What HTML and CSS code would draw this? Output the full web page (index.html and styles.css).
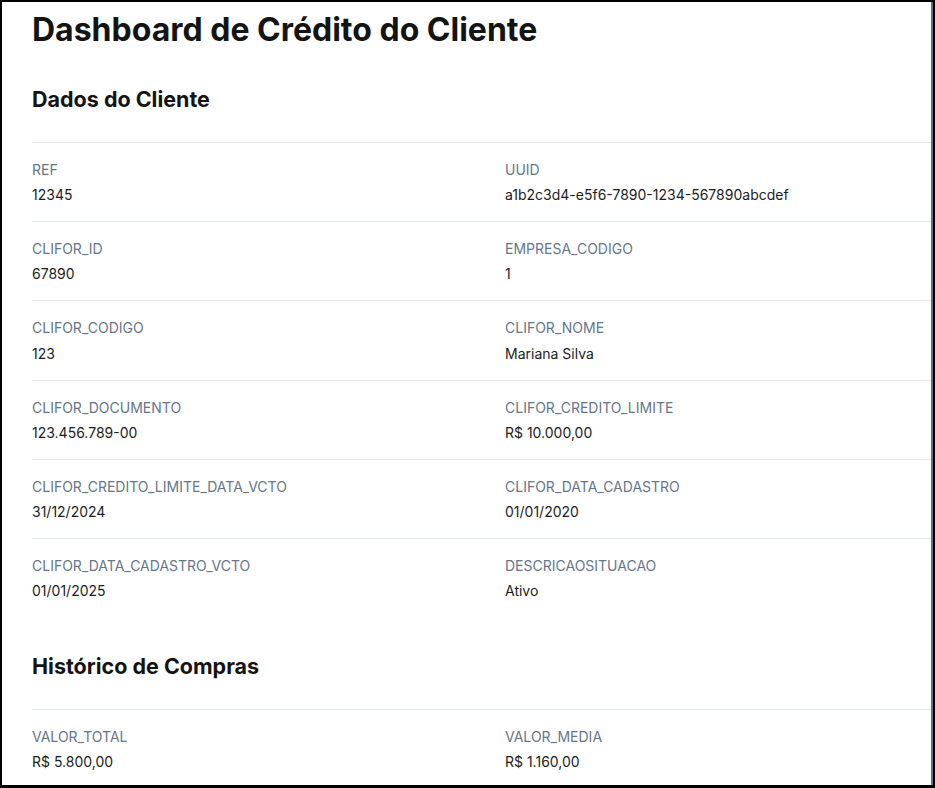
FILE: index.html
```html
<!DOCTYPE html>
<html lang="pt-BR">
    <head>
        <meta charset="UTF-8">
        <title>Dashboard de Crédito do Cliente</title>
        <link rel="stylesheet" href="styles.css">
    </head>
    <body>
        <div class="window">
            <div class="page">
                <h1>Dashboard de Crédito do Cliente</h1>

                <h2>Dados do Cliente</h2>
                <div class="fields">
                    <div class="field"><div class="label">REF</div><div class="value">12345</div></div>
                    <div class="field"><div class="label">UUID</div><div class="value">a1b2c3d4-e5f6-7890-1234-567890abcdef</div></div>
                    <div class="field"><div class="label">CLIFOR_ID</div><div class="value">67890</div></div>
                    <div class="field"><div class="label">EMPRESA_CODIGO</div><div class="value">1</div></div>
                    <div class="field"><div class="label">CLIFOR_CODIGO</div><div class="value">123</div></div>
                    <div class="field"><div class="label">CLIFOR_NOME</div><div class="value">Mariana Silva</div></div>
                    <div class="field"><div class="label">CLIFOR_DOCUMENTO</div><div class="value">123.456.789-00</div></div>
                    <div class="field"><div class="label">CLIFOR_CREDITO_LIMITE</div><div class="value">R$ 10.000,00</div></div>
                    <div class="field"><div class="label">CLIFOR_CREDITO_LIMITE_DATA_VCTO</div><div class="value">31/12/2024</div></div>
                    <div class="field"><div class="label">CLIFOR_DATA_CADASTRO</div><div class="value">01/01/2020</div></div>
                    <div class="field"><div class="label">CLIFOR_DATA_CADASTRO_VCTO</div><div class="value">01/01/2025</div></div>
                    <div class="field"><div class="label">DESCRICAOSITUACAO</div><div class="value">Ativo</div></div>
                </div>

                <h2>Histórico de Compras</h2>
                <div class="fields">
                    <div class="field"><div class="label">VALOR_TOTAL</div><div class="value">R$ 5.800,00</div></div>
                    <div class="field"><div class="label">VALOR_MEDIA</div><div class="value">R$ 1.160,00</div></div>
                </div>
            </div>
        </div>
    </body>
</html>
```

FILE: styles.css
```css
*{
    padding: 0px;
    margin: 0px;
    box-sizing: border-box;
}
html,body{
    height: 100%;
    background: #000;
    overflow: hidden;
}
body{
    font-family: Inter, "Noto Sans", sans-serif;
    color: #1f2328;
}
.window{
    margin: 2px 0 0 2px;
    width: 931px;
    height: 783px;
    background: #fff;
    border-right: 2px solid #5d6d8a;
    overflow: hidden;
}
.page{
    width: 976px;
    padding: 8px 0 0 30px;
}
h1{
    font-size: 32px;
    line-height: 40px;
    font-weight: 700;
    color: #141414;
}
h2{
    font-size: 21.5px;
    line-height: 28px;
    font-weight: 700;
    color: #141414;
    margin-top: 35px;
    margin-bottom: 29px;
}
.fields + h2{
    margin-top: 35px;
}
.fields{
    display: grid;
    grid-template-columns: 1fr 1fr;
}
.field{
    border-top: 1px solid #e3e8ee;
    padding: 16px 0 16px 0;
    font-size: 14px;
    line-height: 21px;
}
.label{
    color: #66768a;
}
.value{
    margin-top: 0.3em;
    color: #1c1c1c;
}
```
